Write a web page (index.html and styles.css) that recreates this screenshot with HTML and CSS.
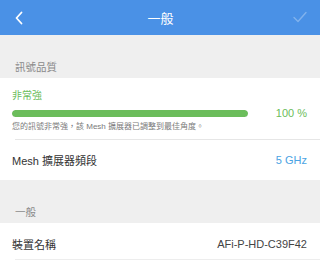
FILE: index.html
```html
<!DOCTYPE html>
<html lang="zh-Hant">
<head>
<meta charset="utf-8">
<link rel="stylesheet" href="styles.css">
</head>
<body>
<div class="screen">
  <header class="navbar">
    <span class="nav-back">
      <svg width="10" height="14" viewBox="0 0 10 14"><path d="M7.5 1.5 L2.5 7 L7.5 12.5" fill="none" stroke="#fff" stroke-width="1.8" stroke-linecap="round" stroke-linejoin="round"/></svg>
    </span>
    <span class="nav-title">一般</span>
    <span class="nav-done">
      <svg width="14" height="12" viewBox="0 0 14 12"><path d="M1 6.5 L5 10.5 L13 1.5" fill="none" stroke="rgba(255,255,255,0.3)" stroke-width="1.4" stroke-linecap="round" stroke-linejoin="round"/></svg>
    </span>
  </header>

  <div class="section-head">訊號品質</div>
  <div class="group">
    <div class="signal">
      <div class="signal-level">非常強</div>
      <div class="signal-bar-row">
        <div class="bar"><div class="bar-fill" style="width:100%"></div></div>
        <div class="signal-value">100 %</div>
      </div>
      <div class="signal-desc">您的訊號非常強，該 Mesh 擴展器已調整到最佳角度。</div>
    </div>
    <div class="row row-sep">
      <span class="row-label">Mesh 擴展器頻段</span>
      <span class="row-value blue">5 GHz</span>
    </div>
  </div>

  <div class="section-head">一般</div>
  <div class="group">
    <div class="row row-last">
      <span class="row-label">裝置名稱</span>
      <span class="row-value">AFi-P-HD-C39F42</span>
    </div>
  </div>
</div>
</body>
</html>
```
FILE: styles.css
```css
* { box-sizing: border-box; }
html, body { margin: 0; padding: 0; }
body {
  width: 320px;
  height: 264px;
  overflow: hidden;
  background: #efefef;
  font-family: "Liberation Sans", "Noto Sans CJK TC", sans-serif;
  color: #333;
}
.screen { display: flex; flex-direction: column; }

.navbar {
  height: 35px;
  background: #4a91e6;
  display: flex;
  align-items: center;
  justify-content: space-between;
  padding: 0 13px 0 14px;
}
.nav-back { display: flex; width: 30px; }
.nav-title {
  color: #fff;
  font-size: 13px;
  line-height: 16px;
  margin-top: 2px;
}
.nav-done { display: flex; width: 30px; justify-content: flex-end; margin-top: -1px; }

.section-head {
  height: 43px;
  display: flex;
  align-items: flex-end;
  padding: 0 0 5px 15px;
  font-size: 10.5px;
  line-height: 12px;
  color: #8a8a8a;
}

.group { background: #fff; display: flex; flex-direction: column; }

.signal {
  display: flex;
  flex-direction: column;
  padding: 11px 13px 6px 12px;
}
.signal-level {
  color: #6bbd5b;
  font-size: 10px;
  line-height: 14px;
}
.signal-bar-row {
  display: flex;
  align-items: center;
  height: 14px;
  margin-top: 3px;
}
.bar {
  flex: 1;
  height: 7px;
  border-radius: 4px;
  background: #e6e6e6;
  overflow: hidden;
}
.bar-fill { height: 100%; background: #6bbd5b; border-radius: 4px; }
.signal-value {
  width: 59px;
  text-align: right;
  color: #6bbd5b;
  font-size: 11px;
  line-height: 14px;
}
.signal-desc {
  margin-top: 1px;
  font-size: 8px;
  line-height: 12px;
  color: #7a7a7a;
}

.row {
  display: flex;
  align-items: center;
  justify-content: space-between;
  height: 41px;
  padding: 0 13px 0 12px;
  font-size: 11px;
  position: relative;
}
.row-sep::before {
  content: "";
  position: absolute;
  top: 0; left: 15px; right: 0;
  height: 1px;
  background: #e6e6e6;
}
.row-last { height: 41px; }
.row-last::after {
  content: "";
  position: absolute;
  bottom: 4px; left: 15px; right: 0;
  height: 1px;
  background: #ededed;
}
.row-label { color: #333; }
.row-value { color: #444; }
.blue { color: #4aa3e3; }
```
